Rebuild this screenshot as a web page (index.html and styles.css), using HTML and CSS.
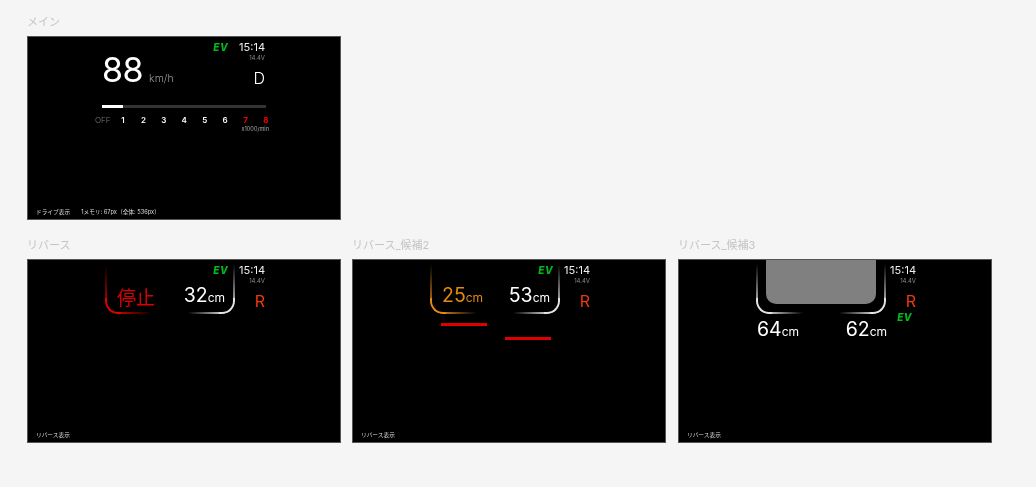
FILE: index.html
```html
<!DOCTYPE html>
<html>
<head>
    <title>Display variations</title>
    <link rel="stylesheet" href="styles.css">
</head>
<body>
    <div class="board">
        <div class="frame">
            <h2 class="frame-label">メイン</h2>
            <div class="screen">
                <div class="layer hud">
                    <div class="hud-top">
                        <div class="speed">
                            <span class="speed-value">88</span>
                            <span class="speed-unit">km/h</span>
                        </div>
                        <div class="status">
                            <div class="status-row">
                                <span class="ev">EV</span>
                                <span class="time">15:14</span>
                            </div>
                            <div class="volt">14.4V</div>
                            <div class="gear">D</div>
                        </div>
                    </div>
                    <div class="rev-bar"><div class="rev-fill"></div></div>
                    <div class="rev-scale">
                        <span class="rev-off">OFF</span>
                        <span>1</span>
                        <span>2</span>
                        <span>3</span>
                        <span>4</span>
                        <span>5</span>
                        <span>6</span>
                        <span class="rev-red">7</span>
                        <span class="rev-red">8</span>
                    </div>
                    <div class="rev-unit">x1000/min</div>
                </div>
                <div class="layer footer">
                    <span>ドライブ表示</span>
                    <span>1メモリ: 67px（全体: 536px）</span>
                </div>
            </div>
        </div>

        <div class="frame-row">
            <div class="frame">
                <h2 class="frame-label">リバース</h2>
                <div class="screen">
                    <div class="layer guides">
                        <div class="guide-col">
                            <div class="guide guide-left guide-red">
                                <span class="stop">停止</span>
                            </div>
                        </div>
                        <div class="guide-col">
                            <div class="guide guide-right guide-white">
                                <span class="dist">32<small>cm</small></span>
                            </div>
                        </div>
                    </div>
                    <div class="layer status-layer">
                        <div class="status">
                            <div class="status-row">
                                <span class="ev">EV</span>
                                <span class="time">15:14</span>
                            </div>
                            <div class="volt">14.4V</div>
                            <div class="gear gear-r">R</div>
                        </div>
                    </div>
                    <div class="layer footer"><span>リバース表示</span></div>
                </div>
            </div>

            <div class="frame">
                <h2 class="frame-label">リバース_候補2</h2>
                <div class="screen">
                    <div class="layer guides">
                        <div class="guide-col">
                            <div class="guide guide-left guide-orange">
                                <span class="dist dist-orange">25<small>cm</small></span>
                            </div>
                            <div class="stop-bar stop-bar-near"></div>
                        </div>
                        <div class="guide-col">
                            <div class="guide guide-right guide-white">
                                <span class="dist">53<small>cm</small></span>
                            </div>
                            <div class="stop-bar stop-bar-far"></div>
                        </div>
                    </div>
                    <div class="layer status-layer">
                        <div class="status">
                            <div class="status-row">
                                <span class="ev">EV</span>
                                <span class="time">15:14</span>
                            </div>
                            <div class="volt">14.4V</div>
                            <div class="gear gear-r">R</div>
                        </div>
                    </div>
                    <div class="layer footer"><span>リバース表示</span></div>
                </div>
            </div>

            <div class="frame frame-last">
                <h2 class="frame-label">リバース_候補3</h2>
                <div class="screen">
                    <div class="layer car-layer"><div class="car"></div></div>
                    <div class="layer guides">
                        <div class="guide-col">
                            <div class="guide guide-left guide-white"></div>
                            <div class="dist dist-below">64<small>cm</small></div>
                        </div>
                        <div class="guide-col">
                            <div class="guide guide-right guide-white"></div>
                            <div class="dist dist-below dist-below-right">62<small>cm</small></div>
                        </div>
                    </div>
                    <div class="layer status-layer">
                        <div class="status">
                            <div class="status-row">
                                <span class="time">15:14</span>
                            </div>
                            <div class="volt">14.4V</div>
                            <div class="gear gear-r">R</div>
                            <div class="ev ev-below">EV</div>
                        </div>
                    </div>
                    <div class="layer footer"><span>リバース表示</span></div>
                </div>
            </div>
        </div>
    </div>
</body>
</html>
```

FILE: styles.css
```css
/* Base styles */
* {
    margin: 0;
    padding: 0;
    box-sizing: border-box;
}

body {
    font-family: Inter, "Noto Sans CJK JP", sans-serif;
    background-color: #f5f5f5;
    color: white;
}

.board {
    padding: 14px 0 0 27px;
}

/* Frames */
.frame-row {
    display: flex;
    gap: 11px;
    margin-top: 17px;
}

.frame {
    width: 314px;
}

.frame-last {
    margin-left: 1px;
}

.frame-label {
    height: 22px;
    font-size: 11px;
    font-weight: 400;
    line-height: 16px;
    color: #c4c4c4;
    will-change: transform;
}

.screen {
    display: grid;
    height: 184px;
    background-color: #000;
    border: 1px solid #555;
    overflow: hidden;
}

/* All the layers of a screen share one grid cell */
.layer {
    grid-area: 1 / 1;
    min-width: 0;
    will-change: transform;
}

/* Main display */
.hud {
    padding: 3px 0 0 74px;
    width: 237px;
}

.hud-top {
    display: flex;
    justify-content: space-between;
    height: 65px;
}

.speed {
    display: flex;
    align-items: baseline;
    gap: 6px;
    padding-top: 7px;
    height: 56px;
}

.speed-value {
    font-size: 34px;
    line-height: 46px;
    font-weight: 400;
    letter-spacing: -0.5px;
}

.speed-unit {
    font-size: 10.5px;
    font-weight: 300;
    color: #999;
}

.rev-bar {
    width: 164px;
    height: 3px;
    background-color: #333;
}

.rev-fill {
    width: 21px;
    height: 3px;
    background-color: #fff;
}

.rev-scale {
    display: flex;
    margin: 7px 0 0 -7px;
    font-size: 8px;
    font-weight: 600;
    line-height: 10px;
}

.rev-scale span {
    flex: none;
    width: 20.43px;
    text-align: center;
}

.rev-scale .rev-off {
    width: 15px;
    margin-right: 2.75px;
    font-weight: 300;
    color: #777;
}

.rev-scale .rev-red {
    font-weight: 700;
    color: #f00000;
}

.rev-unit {
    width: 167px;
    font-size: 5.6px;
    line-height: 7px;
    margin-top: 1px;
    text-align: right;
    color: #aaa;
}

/* Status block */
.status-layer {
    padding-top: 3px;
    padding-right: 75px;
    display: flex;
    justify-content: flex-end;
}

.status {
    display: flex;
    flex-direction: column;
    align-items: flex-end;
}

.status-row {
    display: flex;
    align-items: center;
    gap: 11px;
    height: 14px;
}

.ev {
    font-size: 10px;
    font-weight: 800;
    font-style: italic;
    letter-spacing: 0.5px;
    line-height: 12px;
    color: #00b81e;
}

.ev-below {
    margin: -2px 4px 0 0;
}

.time {
    font-size: 11px;
    line-height: 12px;
    color: #eee;
}

.volt {
    font-size: 6px;
    line-height: 8px;
    color: #888;
}

.gear {
    margin-top: 4px;
    font-size: 16px;
    font-weight: 300;
    line-height: 24px;
}

.gear-r {
    font-weight: 400;
    color: #ee3a08;
}

/* Parking guides */
.guides {
    display: flex;
    justify-content: space-between;
    width: 130px;
    margin-left: 77px;
    margin-top: 4px;
}

.guide-col {
    width: 47px;
    display: flex;
    flex-direction: column;
}

.guide {
    display: flex;
    align-items: center;
    width: 47px;
    height: 50px;
    flex: none;
    position: relative;
}

/* The stroke sits on a pseudo element so the fade does not touch the text */
.guide::before {
    content: "";
    position: absolute;
    inset: 0;
    border-style: solid;
    border-width: 0;
    border-bottom-width: 2px;
    border-color: var(--guide);
    -webkit-mask-repeat: no-repeat;
    mask-repeat: no-repeat;
    -webkit-mask-size: 16px 100%, 100% 16px;
    mask-size: 16px 100%, 100% 16px;
}

.guide-left {
    justify-content: flex-start;
    padding-left: 12px;
}

.guide-left::before {
    border-left-width: 2px;
    border-bottom-left-radius: 13px;
    -webkit-mask-image: linear-gradient(to bottom, transparent, #000 100%), linear-gradient(to right, #000 20%, transparent);
    mask-image: linear-gradient(to bottom, transparent, #000 100%), linear-gradient(to right, #000 20%, transparent);
    -webkit-mask-position: left top, left bottom;
    mask-position: left top, left bottom;
}

.guide-right {
    justify-content: flex-end;
    padding-right: 10px;
}

.guide-right::before {
    border-right-width: 2px;
    border-bottom-right-radius: 13px;
    -webkit-mask-image: linear-gradient(to bottom, transparent, #000 100%), linear-gradient(to left, #000 20%, transparent);
    mask-image: linear-gradient(to bottom, transparent, #000 100%), linear-gradient(to left, #000 20%, transparent);
    -webkit-mask-position: right top, right bottom;
    mask-position: right top, right bottom;
}

.guide-red {
    --guide: #e00000;
}

.guide-orange {
    --guide: #e08a10;
}

.guide-white {
    --guide: #e4e4e4;
}

.stop {
    flex: none;
    margin-top: 14px;
    font-size: 19px;
    font-weight: 400;
    color: #d80000;
    font-family: "Noto Sans CJK JP", sans-serif;
}

.dist {
    flex: none;
    margin-top: 14px;
    font-size: 19.5px;
    font-weight: 400;
    line-height: 24px;
    white-space: nowrap;
}

.dist small {
    font-size: 12px;
    font-weight: 400;
}

.dist-orange {
    color: #e08a10;
}

.dist-below {
    margin: 3px 0 0 1px;
}

.dist-below-right {
    display: flex;
    justify-content: flex-end;
    align-items: baseline;
    margin: 3px -1px 0 0;
}

.stop-bar {
    width: 46px;
    height: 3px;
    flex: none;
    background-color: #e00000;
}

.stop-bar-near {
    margin: 9px 0 0 11px;
}

.stop-bar-far {
    margin: 23px 0 0 -8px;
}

/* Grey car shape in candidate 3 */
.car-layer {
    padding-left: 87px;
}

.car {
    width: 110px;
    height: 44px;
    background-color: #808080;
    border-radius: 0 0 10px 10px;
}

/* Caption at the bottom of each screen */
.footer {
    align-self: end;
    display: flex;
    gap: 11px;
    padding: 0 0 3px 8px;
    font-size: 5.7px;
    line-height: 8px;
    color: #ddd;
    font-family: Inter, "Noto Sans CJK JP", sans-serif;
}
```
